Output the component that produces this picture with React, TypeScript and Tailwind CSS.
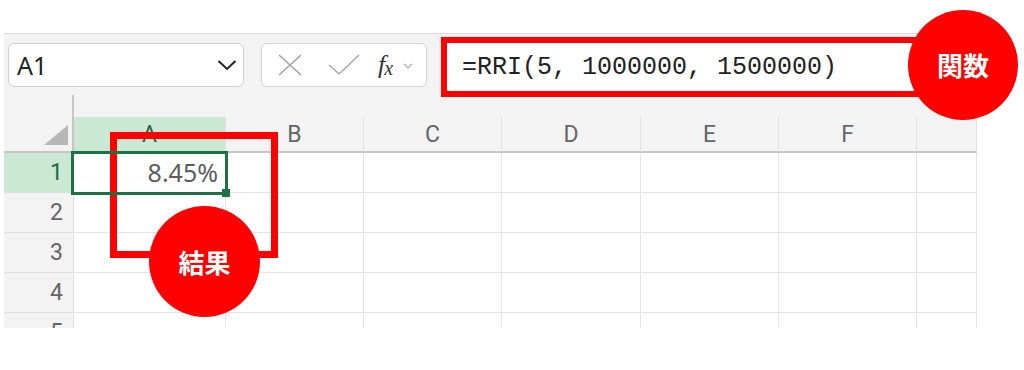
const columns = [
  { label: "A", w: "w-[152px]", active: true },
  { label: "B", w: "w-[138px]" },
  { label: "C", w: "w-[138px]" },
  { label: "D", w: "w-[139px]" },
  { label: "E", w: "w-[138px]" },
  { label: "F", w: "w-[138px]" },
  { label: "", w: "flex-1" },
];

const rows = [1, 2, 3, 4, 5];

const headFont = { fontFamily: "Roboto, 'Noto Sans', sans-serif" };

const Toolbar = () => (
  <div className="flex h-[61px] items-start pl-[4px] pt-[9px]">
    {/* name box */}
    <div className="flex h-[44px] w-[236px] items-center justify-between rounded-[6px] border border-[#cfcfcf] bg-white pl-[8px] pr-[6px]">
      <span className="text-[25px] leading-none text-[#222]" style={{ fontFamily: "'Noto Sans', sans-serif" }}>
        A1
      </span>
      <svg width="20" height="12" viewBox="0 0 20 12" fill="none">
        <path d="M1.5 2 L10 10 L18.5 2" stroke="#222" strokeWidth="2" />
      </svg>
    </div>

    {/* cancel / enter / fx */}
    <div className="ml-[17px] flex h-[44px] w-[166px] items-center rounded-[6px] border border-[#d4d4d4] bg-white pl-[16px]">
      <svg width="24" height="22" viewBox="0 0 24 22" fill="none">
        <path d="M1 1 L23 21 M23 1 L1 21" stroke="#a3a3a3" strokeWidth="1.6" />
      </svg>
      <svg className="ml-[26px]" width="32" height="22" viewBox="0 0 32 22" fill="none">
        <path d="M1 11 L11 20 L31 1" stroke="#ababab" strokeWidth="1.6" />
      </svg>
      <span className="ml-[18px] flex items-end leading-none text-[#333]" style={{ fontFamily: "'Liberation Serif', serif" }}>
        <span className="text-[26px] italic">f</span>
        <span className="-ml-[1px] text-[20px] italic">x</span>
      </span>
      <svg className="ml-[10px] mt-[2px]" width="10" height="6" viewBox="0 0 10 6" fill="none">
        <path d="M1 1 L5 5 L9 1" stroke="#b0b0b0" strokeWidth="1.2" />
      </svg>
    </div>

    {/* formula bar */}
    <div className="-mt-[1px] ml-[19px] flex h-[50px] flex-1 items-center border-y border-[#d2d2d2] bg-white pl-[16px]">
      <span className="text-[25px] leading-none text-[#222]" style={{ fontFamily: "'Liberation Mono', monospace" }}>
        =RRI(5, 1000000, 1500000)
      </span>
    </div>
  </div>
);

const HeaderRow = () => (
  <div className="flex items-end">
    <div className="flex h-[58px] w-[70px] items-end justify-end border-b-2 border-r-2 border-[#c6c6c6] pb-[6px] pr-[4px]">
      <svg width="24" height="20" viewBox="0 0 24 20">
        <polygon points="24,0 24,20 0,20" fill="#b7b7b7" />
      </svg>
    </div>
    {columns.map((c, i) => (
      <div
        key={i}
        className={`flex h-[36px] ${c.w} items-center justify-center border-b-2 border-r border-b-[#c6c6c6] border-r-[#e2e2e2] text-[23px] leading-none ${
          c.active ? "bg-[#cae8d4] text-[#1f6b3f]" : "text-[#666]"
        }`}
        style={headFont}
      >
        {c.label}
      </div>
    ))}
  </div>
);

const GridRow = ({ n }: { n: number }) => {
  const sel = n === 1;
  return (
    <div className="flex h-[40px]">
      <div
        className={`flex w-[70px] items-center justify-end border-b border-r border-[#dedede] pr-[10px] text-[23px] leading-none ${
          sel ? "bg-[#cae8d4] text-[#1f6b3f]" : "text-[#666]"
        }`}
        style={headFont}
      >
        {n}
      </div>
      {columns.map((c, i) => (
        <div key={i} className={`relative ${c.w} border-b border-r border-[#e4e4e4] bg-white`}>
          {sel && i === 0 && (
            <>
              <div className="absolute -bottom-[3px] -left-[3px] -right-[3px] -top-[2px] z-10 border-[3px] border-[#1e7145]" />
              <div className="absolute -bottom-[5px] -right-[5px] z-20 h-[8px] w-[8px] bg-[#1e7145]" />
              <div
                className="flex h-full items-center justify-end pr-[7px] text-[25px] leading-none text-[#5c5c5c]"
                style={{ fontFamily: "'Noto Sans', sans-serif" }}
              >
                8.45%
              </div>
            </>
          )}
        </div>
      ))}
    </div>
  );
};

const Badge = ({ text, className }: { text: string; className: string }) => (
  <div
    className={`absolute flex items-center justify-center rounded-full bg-[#ff0000] text-[26px] font-bold leading-none text-white ${className}`}
    style={{ fontFamily: "'Noto Sans CJK JP', 'Noto Sans', sans-serif" }}
  >
    {text}
  </div>
);

export default function App() {
  return (
    <div className="relative h-[370px] w-[1024px] overflow-hidden bg-white">
      <div className="ml-[4px] mt-[33px] h-[295px] w-[973px] overflow-hidden border-t border-[#dadada] bg-[#f3f3f3]">
        <Toolbar />
        <HeaderRow />
        {rows.map((n) => (
          <GridRow key={n} n={n} />
        ))}
      </div>

      {/* annotations */}
      <div className="absolute left-[441px] top-[37px] h-[60px] w-[510px] border-[6px] border-[#ff0000]" />
      <Badge text="関数" className="left-[908px] top-[10px] h-[110px] w-[110px]" />

      <div className="absolute left-[110px] top-[132px] h-[126px] w-[168px] border-[7px] border-[#ff0000]" />
      <Badge text="結果" className="left-[149px] top-[206px] h-[111px] w-[111px]" />
    </div>
  );
}
